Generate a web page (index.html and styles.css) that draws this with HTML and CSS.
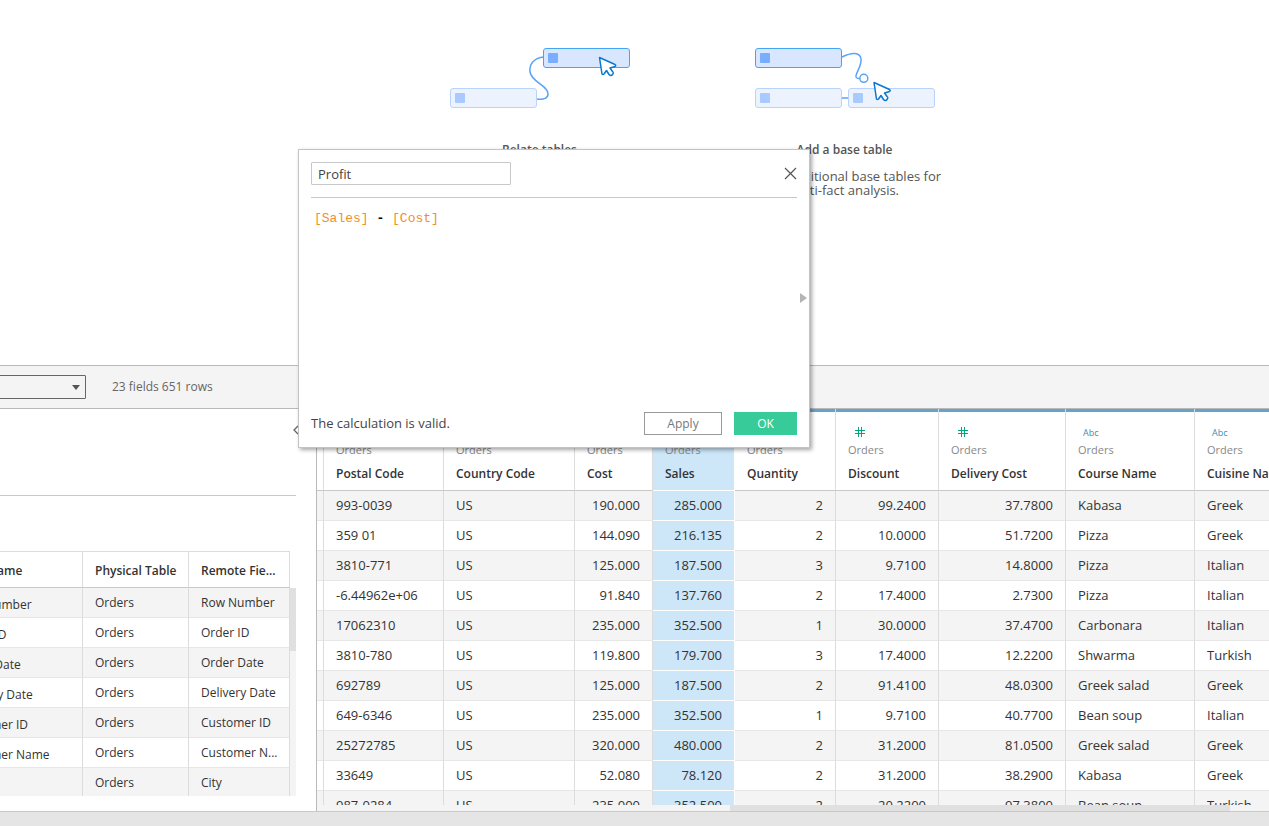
FILE: index.html
```html
<!DOCTYPE html>
<html lang="en">
<head>
<meta charset="utf-8">
<title>Data Source - Orders</title>
<link rel="stylesheet" href="styles.css">
</head>
<body>
<main class="page">
  <section class="canvas">
    <div class="hint">
      <svg class="hint-art" width="180" height="60" viewBox="0 0 180 60" fill="none">
        <path d="M94 9C83 10 79 17 80 24c2 11 18 13 18 22 0 4-4 6-11 5" stroke="#5ba3f7" stroke-width="1.5"/>
        <rect x=".5" y="40.500" width="86" height="19" rx="2.500" fill="#ecf3ff" stroke="#b9d3fb"/>
        <rect x="5" y="45" width="10" height="10" rx="1" fill="#a9caff"/>
        <rect x="93.500" y=".5" width="86" height="19" rx="2.500" fill="#d8e6ff" stroke="#45a5f5"/>
        <rect x="98" y="5" width="10" height="10" rx="1" fill="#79aeff"/>
        <path d="M149.500 9.500 152 26q1 1 2 0l2.500-3.500 2.500 4q2 2 3.500 0t0-3l-2.500-3.500 5-1.500q1.500-1 0-2z" fill="#fff" stroke="#0a78cf" stroke-width="1.500" stroke-linejoin="round"/>
      </svg>
      <h2 class="hint-title">Relate tables</h2>
    </div>
    <div class="hint">
      <svg class="hint-art" width="180" height="60" viewBox="0 0 180 60" fill="none">
        <path d="M87 9c10-5 18-5 19 2s-6 15-5 18q1 2 4 1.500M87 50h7" stroke="#5ba3f7" stroke-width="1.500"/>
        <circle cx="108.800" cy="30.300" r="4" fill="#fff" stroke="#5ba3f7" stroke-width="1.500"/>
        <rect x=".5" y=".5" width="86" height="19" rx="2.500" fill="#d8e6ff" stroke="#45a5f5"/>
        <rect x="5" y="5" width="10" height="10" rx="1" fill="#79aeff"/>
        <rect x=".5" y="40.500" width="86" height="19" rx="2.500" fill="#ecf3ff" stroke="#b9d3fb"/>
        <rect x="5" y="45" width="10" height="10" rx="1" fill="#a9caff"/>
        <rect x="93.500" y="40.500" width="86" height="19" rx="2.500" fill="#ecf3ff" stroke="#b9d3fb"/>
        <rect x="98" y="45" width="10" height="10" rx="1" fill="#a9caff"/>
        <path d="M119 34.500 121.500 51q1 1 2 0l2.500-3.500 2.500 4q2 2 3.500 0t0-3l-2.500-3.500 5-1.500q1.500-1 0-2z" fill="#fff" stroke="#0a78cf" stroke-width="1.500" stroke-linejoin="round"/>
      </svg>
      <h2 class="hint-title">Add a base table</h2>
      <p class="hint-text">Additional base tables for multi-fact analysis.</p>
    </div>
  </section>

  <section class="toolbar">
    <div class="picker"><select class="picker-select" aria-label="Table"><option></option></select></div>
    <p class="summary">23 fields 651 rows</p>
  </section>

  <section class="panes">
    <aside class="meta">
      <div class="meta-head">
        <button class="collapse" type="button" aria-label="Collapse"><svg width="6" height="10" viewBox="0 0 6 10" fill="none"><path d="M5 1 1 5l4 4" stroke="#666" stroke-width="1.300"/></svg></button>
      </div>
      <div class="meta-body">
        <div class="meta-scroll">
          <table class="fields">
            <colgroup><col class="f-name"><col class="f-table"><col class="f-remote"></colgroup>
            <thead><tr><th>Field Name</th><th>Physical Table</th><th>Remote Fie...</th></tr></thead>
            <tbody>
              <tr><td>Row Number</td><td>Orders</td><td>Row Number</td></tr>
              <tr><td>Order ID</td><td>Orders</td><td>Order ID</td></tr>
              <tr><td>Order Date</td><td>Orders</td><td>Order Date</td></tr>
              <tr><td>Delivery Date</td><td>Orders</td><td>Delivery Date</td></tr>
              <tr><td>Customer ID</td><td>Orders</td><td>Customer ID</td></tr>
              <tr><td>Customer Name</td><td>Orders</td><td>Customer N...</td></tr>
              <tr><td>City</td><td>Orders</td><td>City</td></tr>
            </tbody>
          </table>
        </div>
        <div class="vbar"><div class="vthumb"></div></div>
      </div>
    </aside>

    <div class="grid">
      <div class="grid-scroll">
        <table class="data">
          <colgroup><col class="c-gutter"><col class="c-postal"><col class="c-country"><col class="c-cost"><col class="c-sales"><col class="c-qty"><col class="c-disc"><col class="c-deliv"><col class="c-course"><col class="c-cuisine"></colgroup>
          <thead>
            <tr>
              <th></th>
              <th><span class="type"></span><span class="src">Orders</span><span class="name">Postal Code</span></th>
              <th><span class="type"></span><span class="src">Orders</span><span class="name">Country Code</span></th>
              <th><span class="type"></span><span class="src">Orders</span><span class="name">Cost</span></th>
              <th class="sel"><span class="type"></span><span class="src">Orders</span><span class="name">Sales</span></th>
              <th><span class="type"></span><span class="src">Orders</span><span class="name">Quantity</span></th>
              <th><span class="type"><svg width="10" height="10" viewBox="0 0 10 10"><path d="M3 0h1v10H3zM6 0h1v10H6zM0 3h10v1H0zM0 6h10v1H0z" fill="#00a87a"/></svg></span><span class="src">Orders</span><span class="name">Discount</span></th>
              <th><span class="type"><svg width="10" height="10" viewBox="0 0 10 10"><path d="M3 0h1v10H3zM6 0h1v10H6zM0 3h10v1H0zM0 6h10v1H0z" fill="#00a87a"/></svg></span><span class="src">Orders</span><span class="name">Delivery Cost</span></th>
              <th><span class="type type-text">Abc</span><span class="src">Orders</span><span class="name">Course Name</span></th>
              <th><span class="type type-text">Abc</span><span class="src">Orders</span><span class="name">Cuisine Name</span></th>
            </tr>
          </thead>
          <tbody>
            <tr><td></td><td>993-0039</td><td>US</td><td class="num">190.000</td><td class="num sel">285.000</td><td class="num">2</td><td class="num">99.2400</td><td class="num">37.7800</td><td>Kabasa</td><td>Greek</td></tr>
            <tr><td></td><td>359 01</td><td>US</td><td class="num">144.090</td><td class="num sel">216.135</td><td class="num">2</td><td class="num">10.0000</td><td class="num">51.7200</td><td>Pizza</td><td>Greek</td></tr>
            <tr><td></td><td>3810-771</td><td>US</td><td class="num">125.000</td><td class="num sel">187.500</td><td class="num">3</td><td class="num">9.7100</td><td class="num">14.8000</td><td>Pizza</td><td>Italian</td></tr>
            <tr><td></td><td>-6.44962e+06</td><td>US</td><td class="num">91.840</td><td class="num sel">137.760</td><td class="num">2</td><td class="num">17.4000</td><td class="num">2.7300</td><td>Pizza</td><td>Italian</td></tr>
            <tr><td></td><td>17062310</td><td>US</td><td class="num">235.000</td><td class="num sel">352.500</td><td class="num">1</td><td class="num">30.0000</td><td class="num">37.4700</td><td>Carbonara</td><td>Italian</td></tr>
            <tr><td></td><td>3810-780</td><td>US</td><td class="num">119.800</td><td class="num sel">179.700</td><td class="num">3</td><td class="num">17.4000</td><td class="num">12.2200</td><td>Shwarma</td><td>Turkish</td></tr>
            <tr><td></td><td>692789</td><td>US</td><td class="num">125.000</td><td class="num sel">187.500</td><td class="num">2</td><td class="num">91.4100</td><td class="num">48.0300</td><td>Greek salad</td><td>Greek</td></tr>
            <tr><td></td><td>649-6346</td><td>US</td><td class="num">235.000</td><td class="num sel">352.500</td><td class="num">1</td><td class="num">9.7100</td><td class="num">40.7700</td><td>Bean soup</td><td>Italian</td></tr>
            <tr><td></td><td>25272785</td><td>US</td><td class="num">320.000</td><td class="num sel">480.000</td><td class="num">2</td><td class="num">31.2000</td><td class="num">81.0500</td><td>Greek salad</td><td>Greek</td></tr>
            <tr><td></td><td>33649</td><td>US</td><td class="num">52.080</td><td class="num sel">78.120</td><td class="num">2</td><td class="num">31.2000</td><td class="num">38.2900</td><td>Kabasa</td><td>Greek</td></tr>
            <tr><td></td><td>987-0284</td><td>US</td><td class="num">235.000</td><td class="num sel">352.500</td><td class="num">2</td><td class="num">20.2200</td><td class="num">97.3800</td><td>Bean soup</td><td>Turkish</td></tr>
          </tbody>
        </table>
      </div>
      <div class="hbar"><div class="hthumb"></div></div>
    </div>
  </section>
  <footer class="status"></footer>
</main>

<div class="dialog" role="dialog" aria-label="Calculation editor">
  <div class="dialog-head">
    <input class="calc-name" type="text" value="Profit" aria-label="Calculation name">
    <button class="close" type="button" aria-label="Close"><svg width="13" height="13" viewBox="0 0 13 13"><path d="M1 1l11 11M12 1 1 12" stroke="#555" stroke-width="1.200"/></svg></button>
  </div>
  <div class="editor">
    <code class="formula"><span class="field">[Sales]</span> <b>-</b> <span class="field">[Cost]</span></code>
    <button class="expand" type="button" aria-label="Show functions"><svg width="7" height="10" viewBox="0 0 7 10"><path d="M0 0l7 5-7 5z" fill="#b4b4b4"/></svg></button>
  </div>
  <div class="dialog-foot">
    <p class="valid">The calculation is valid.</p>
    <button class="btn" type="button">Apply</button>
    <button class="btn btn-ok" type="button">OK</button>
  </div>
</div>
</body>
</html>
```
FILE: styles.css
```css
* { box-sizing: border-box; }
body {
  margin: 0;
  font: 13px/18px "Open Sans", "Noto Sans", sans-serif;
  color: #333;
  background: #fff;
  overflow: hidden;
}
h2, p { margin: 0; }
button { padding: 0; border: 0; background: none; font: inherit; }
svg { display: block; }
table { border-collapse: separate; border-spacing: 0; table-layout: fixed; }

.page { display: flex; flex-direction: column; height: 100vh; }

/* Canvas with drag hints */
.canvas {
  flex: 0 0 365px;
  display: flex;
  justify-content: center;
  gap: 125px;
  padding: 48px 0 0 115px;
}
.hint { width: 180px; display: flex; flex-direction: column; }
.hint-title {
  margin-top: 33px;
  font-size: 12px;
  line-height: 18px;
  font-weight: 600;
  text-align: center;
  color: #555;
}
.hint-text { margin: 10px -16px 0 32px; font-size: 13px; line-height: 14px; color: #555; }

/* Toolbar */
.toolbar {
  flex: none;
  display: flex;
  align-items: center;
  gap: 26px;
  height: 44px;
  background: #f4f4f4;
  border: solid #b9b9b9;
  border-width: 1px 0;
}
.picker { position: relative; margin-left: -64px; }
.picker-select {
  display: block;
  width: 150px;
  height: 24px;
  appearance: none;
  border: 1px solid #666;
  border-radius: 1px;
  background: #f4f4f4;
}
.picker::after {
  content: "";
  position: absolute;
  right: 6px;
  top: 10px;
  border: 4px solid transparent;
  border-top: 5px solid #555;
  border-bottom: 0;
}
.summary { font-size: 12px; color: #666; }

/* Panes */
.panes { flex: 1; display: flex; min-height: 0; }
.meta {
  flex: 0 0 317px;
  display: flex;
  flex-direction: column;
  padding: 0 20px 15px 0;
  border-right: 1px solid #b9b9b9;
  overflow: hidden;
}
.meta-head {
  flex: 0 0 87px;
  display: flex;
  justify-content: flex-end;
  align-items: flex-start;
  padding-top: 16px;
  border-bottom: 1px solid #c8c8c8;
}
.collapse { margin-right: -3px; }
.meta-body { flex: 1; display: flex; min-height: 0; margin-top: 55px; }
.meta-scroll { flex: 1; display: flex; justify-content: flex-end; overflow: hidden; }
.fields { flex: none; align-self: flex-start; width: 345px; border-top: 1px solid #dcdcdc; }
.f-name { width: 138px; }
.f-table { width: 106px; }
.f-remote { width: 101px; }
.fields th, .fields td {
  padding: 0 0 0 12px;
  border-right: 1px solid #dcdcdc;
  text-align: left;
  white-space: nowrap;
}
.fields th { height: 36px; padding-top: 2px; font-size: 12px; font-weight: 600; border-bottom: 1px solid #c8c8c8; }
.fields td { height: 30px; font-size: 12px; border-bottom: 1px solid #e6e6e6; }
.fields td:first-child { padding: 4px 0 0 13px; }
tbody tr:nth-child(odd) { background: #f4f4f4; }
.vbar { flex: 0 0 6px; margin-top: 37px; background: #f4f4f4; }
.vthumb { height: 63px; background: #e0e0e0; }

.grid { flex: 1; min-width: 0; display: flex; flex-direction: column; }
.grid-scroll { flex: 1; min-height: 0; overflow: hidden; }
.data { width: 1003px; }
.c-gutter { width: 7px; }
.c-postal { width: 120px; }
.c-country { width: 131px; }
.c-cost { width: 78px; }
.c-sales { width: 82px; }
.c-qty { width: 101px; }
.c-disc { width: 103px; }
.c-deliv { width: 127px; }
.c-course { width: 129px; }
.c-cuisine { width: 125px; }
.data th, .data td { padding: 0 12px 2px; text-align: left; white-space: nowrap; border-right: 1px solid #dcdcdc; }
.data th:first-child, .data td:first-child { padding: 0; }
.data th {
  height: 82px;
  padding-top: 14px;
  vertical-align: top;
  font-weight: 400;
  border-bottom: 1px solid #c8c8c8;
  background: linear-gradient(#63a5c6, #63a5c6) 0 0 / 100% 3px no-repeat padding-box;
}
.data td { height: 30px; border-bottom: 1px solid #e6e6e6; }
.data td.num { text-align: right; }
.data th.sel { background-color: #cde6f8; border-right-color: #fff; border-bottom-color: #fff; }
.data td.sel { background: #cde6f8; background-clip: padding-box; border-right-color: #fff; border-bottom-color: #fff; }
.type { display: flex; align-items: center; height: 18px; padding-left: 7px; }
.type-text { padding: 2px 0 0 5px; font-size: 9px; color: #3f8fb0; }
.src { display: block; font-size: 11px; line-height: 18px; color: #888; }
.name { display: block; margin-top: 6px; font-size: 12px; line-height: 18px; font-weight: 600; }
.hbar { flex: 0 0 6px; display: flex; background: #f4f4f4; }
.hthumb { width: 52.500%; margin-left: 43.400%; background: #e0e0e0; }

.status { flex: 0 0 15px; background: #e5e5e5; border-top: 1px solid #c8c8c8; }

/* Calculation dialog */
.dialog {
  position: absolute;
  left: 298px;
  top: 149px;
  width: 512px;
  display: flex;
  flex-direction: column;
  padding: 12px;
  background: #fff;
  border: 1px solid #c3c3c3;
  box-shadow: 2px 2px 4px rgba(0, 0, 0, .35);
}
.dialog-head {
  display: flex;
  justify-content: space-between;
  align-items: center;
  padding-bottom: 12px;
  border-bottom: 1px solid #c8c8c8;
}
.calc-name {
  width: 200px;
  height: 23px;
  padding: 0 6px;
  border: 1px solid #c8c8c8;
  border-radius: 1px;
  font: inherit;
  color: #444;
}
.editor { height: 214px; display: flex; justify-content: space-between; padding: 12px 0 0 3px; }
.formula { font: 13px/18px "Liberation Mono", monospace; color: #000; }
.field { color: #f28e2b; }
.expand { align-self: center; margin: -26px -10px 0 0; }
.dialog-foot { display: flex; align-items: center; gap: 12px; }
.valid { flex: 1; padding-bottom: 2px; color: #444; }
.btn { width: 78px; height: 23px; border: 1px solid #999; font-size: 12px; color: #777; background: #fff; }
.btn-ok { width: 63px; border-color: #36cb98; background: #36cb98; color: #fff; }
```
